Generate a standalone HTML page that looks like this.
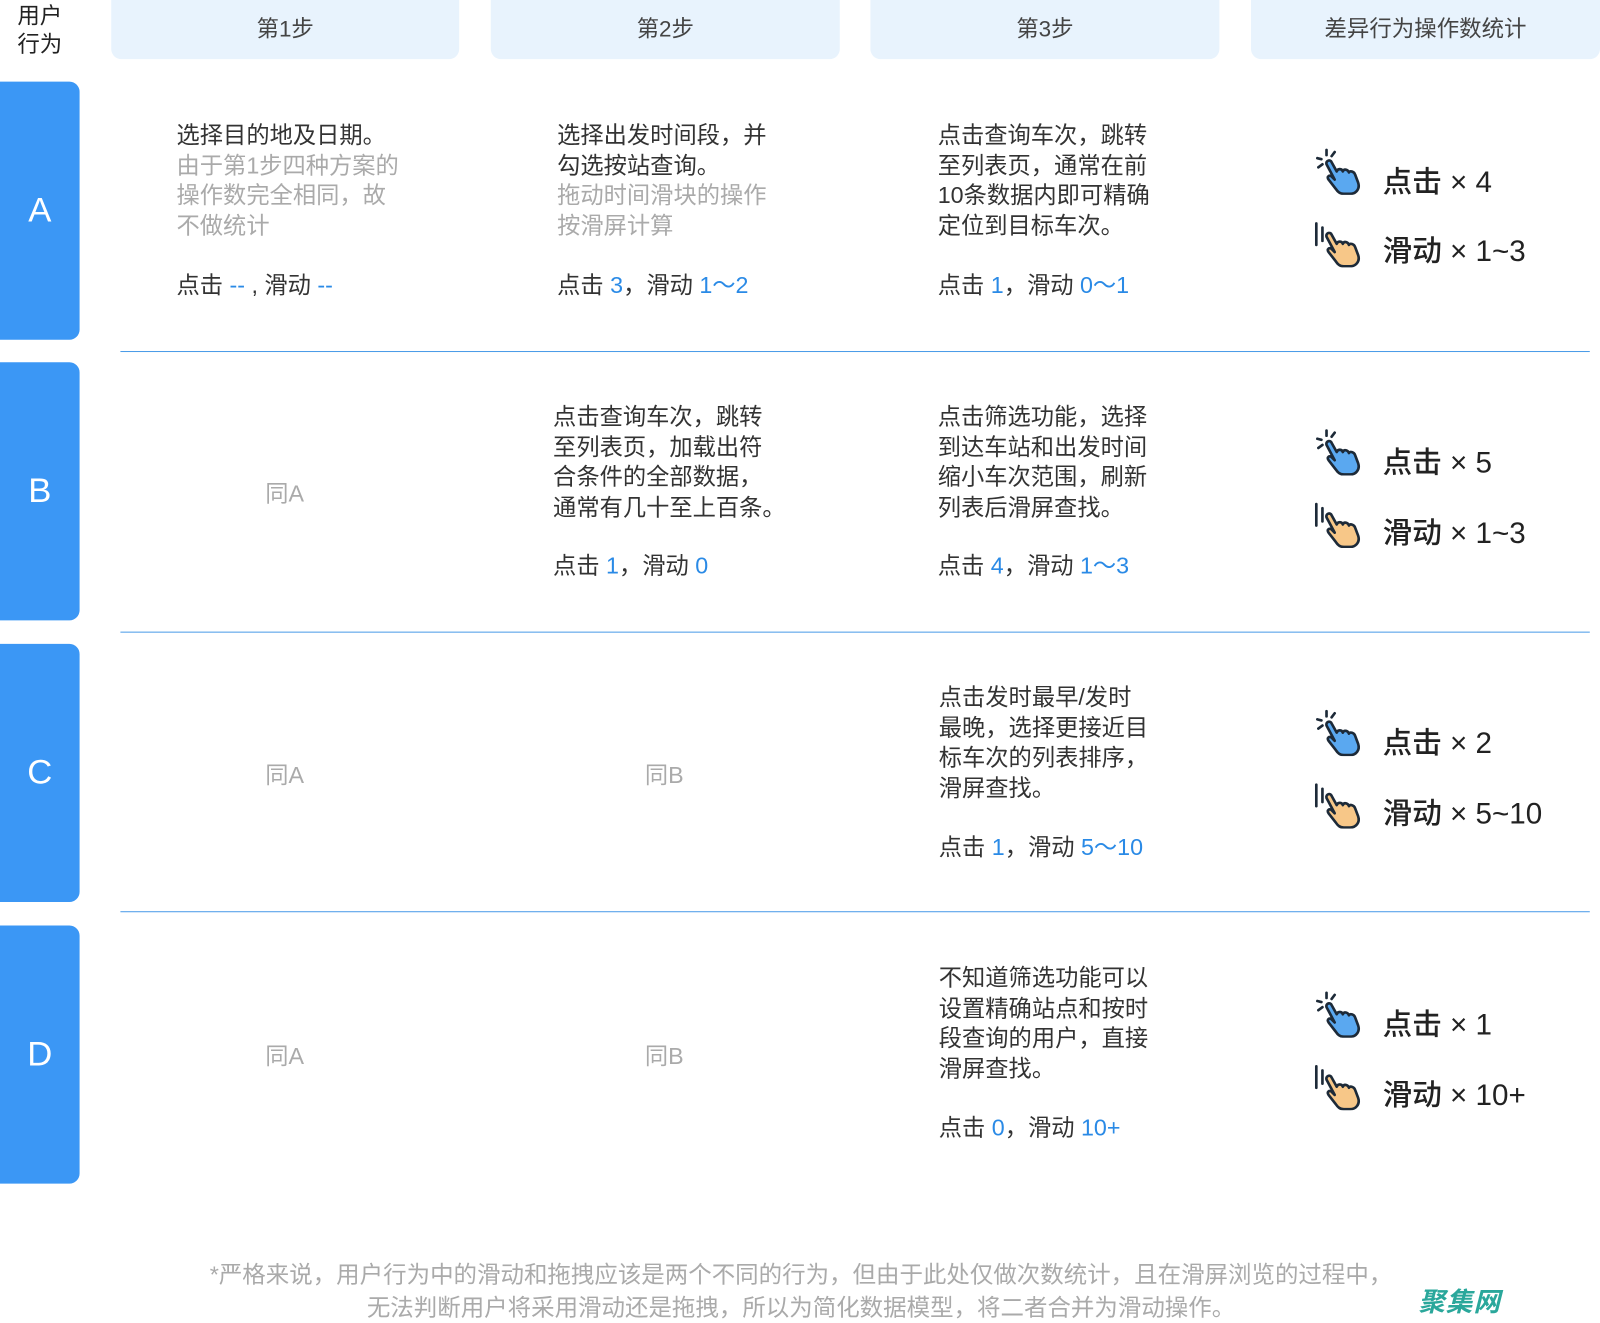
<!DOCTYPE html>
<html><head><meta charset="utf-8"><style>
*{margin:0;padding:0;box-sizing:border-box}
body{width:1600px;height:1320px;background:#fff;position:relative;overflow:hidden;font-family:"Liberation Sans","Noto Sans CJK SC",sans-serif;color:#333}
#w{position:absolute;left:0;top:0;width:1568px;height:1294px;transform:scale(1.0204);transform-origin:0 0}
.a{position:absolute}
.hd{position:absolute;top:0;height:58px;background:#e8f3fd;border-radius:0 0 10px 10px;font-size:22px;color:#444;text-align:center;line-height:58px}
.rl{position:absolute;left:0;width:78px;height:253px;background:#3b97f5;border-radius:0 10px 10px 0;color:#fff;font-size:34px;text-align:center;line-height:253px}
.ln{position:absolute;left:118px;width:1440px;height:1px;background:#4a9be8}
.t{position:absolute;font-size:22.8px;line-height:29.5px;color:#333;white-space:nowrap}
.g{color:#aaa}
.b{color:#2a8ae6}
.same{position:absolute;font-size:22.8px;color:#aaa;transform:translate(-50%,-50%)}
.st{position:absolute;font-size:29px;color:#222;white-space:nowrap;font-weight:500}
.ic{position:absolute;width:52px;height:46px}
</style></head><body>
<svg width="0" height="0" style="position:absolute"><defs>
<g id="hand">
<path d="M14 16 C13 12 18 11 19 14 L24 23 C25 20 29 20 30 23 C31 20 35 21 36 24 C37 22 41 23 42 26 L45 34 C47 40 43 45 37 45 L31 45 C27 45 25 43 23 40 L16 31 C14 28 17 26 19 28 L22 31 Z" stroke="#1d2a38" stroke-width="2.6" stroke-linejoin="round"/>
</g>
</defs></svg>
<div id="w">
<div class="a" style="left:17px;top:2px;font-size:22px;line-height:28px;color:#222">用户<br>行为</div>
<div class="hd" style="left:109px;width:341px">第1步</div>
<div class="hd" style="left:481px;width:342px">第2步</div>
<div class="hd" style="left:853px;width:342px">第3步</div>
<div class="hd" style="left:1226px;width:342px">差异行为操作数统计</div>

<div class="rl" style="top:80px">A</div>
<div class="rl" style="top:355px">B</div>
<div class="rl" style="top:631px">C</div>
<div class="rl" style="top:907px">D</div>
<div class="ln" style="top:344px"></div>
<div class="ln" style="top:619px"></div>
<div class="ln" style="top:893px"></div>

<div class="t" style="left:173px;top:118px">选择目的地及日期。<br><span class="g">由于第1步四种方案的<br>操作数完全相同，故<br>不做统计</span></div>
<div class="t" style="left:173px;top:265px">点击 <span class="b">--</span> , 滑动 <span class="b">--</span></div>
<div class="t" style="left:546px;top:118px">选择出发时间段，并<br>勾选按站查询。<br><span class="g">拖动时间滑块的操作<br>按滑屏计算</span></div>
<div class="t" style="left:546px;top:265px">点击 <span class="b">3</span>，滑动 <span class="b">1～2</span></div>
<div class="t" style="left:919px;top:118px">点击查询车次，跳转<br>至列表页，通常在前<br>10条数据内即可精确<br>定位到目标车次。</div>
<div class="t" style="left:919px;top:265px">点击 <span class="b">1</span>，滑动 <span class="b">0～1</span></div>

<div class="same" style="left:279px;top:482px">同A</div>
<div class="t" style="left:542px;top:394px">点击查询车次，跳转<br>至列表页，加载出符<br>合条件的全部数据，<br>通常有几十至上百条。</div>
<div class="t" style="left:542px;top:540px">点击 <span class="b">1</span>，滑动 <span class="b">0</span></div>
<div class="t" style="left:919px;top:394px">点击筛选功能，选择<br>到达车站和出发时间<br>缩小车次范围，刷新<br>列表后滑屏查找。</div>
<div class="t" style="left:919px;top:540px">点击 <span class="b">4</span>，滑动 <span class="b">1～3</span></div>

<div class="same" style="left:279px;top:758px">同A</div>
<div class="same" style="left:651px;top:758px">同B</div>
<div class="t" style="left:920px;top:669px">点击发时最早/发时<br>最晚，选择更接近目<br>标车次的列表排序，<br>滑屏查找。</div>
<div class="t" style="left:920px;top:816px">点击 <span class="b">1</span>，滑动 <span class="b">5～10</span></div>

<div class="same" style="left:279px;top:1033px">同A</div>
<div class="same" style="left:651px;top:1033px">同B</div>
<div class="t" style="left:920px;top:944px">不知道筛选功能可以<br>设置精确站点和按时<br>段查询的用户，直接<br>滑屏查找。</div>
<div class="t" style="left:920px;top:1091px">点击 <span class="b">0</span>，滑动 <span class="b">10+</span></div>

<svg class="ic" style="left:1286px;top:145px" viewBox="0 0 52 46"><g stroke="#1d2a38" stroke-width="2.6" stroke-linecap="round"><line x1="14" y1="2" x2="14" y2="7"/><line x1="5" y1="10" x2="9" y2="11"/><line x1="6" y1="19" x2="10" y2="16"/><line x1="22" y1="4" x2="19" y2="8"/></g><use href="#hand" fill="#5aa8f0"/></svg>
<div class="st" style="left:1355px;top:155px">点击 × 4</div>
<svg class="ic" style="left:1286px;top:216px" viewBox="0 0 52 46"><g stroke="#1d2a38" stroke-width="2.6" stroke-linecap="round"><line x1="4" y1="3" x2="4" y2="24"/><line x1="10" y1="7" x2="10" y2="20"/></g><use href="#hand" fill="#f7c788"/></svg>
<div class="st" style="left:1355px;top:223px">滑动 × 1~3</div>

<svg class="ic" style="left:1286px;top:420px" viewBox="0 0 52 46"><g stroke="#1d2a38" stroke-width="2.6" stroke-linecap="round"><line x1="14" y1="2" x2="14" y2="7"/><line x1="5" y1="10" x2="9" y2="11"/><line x1="6" y1="19" x2="10" y2="16"/><line x1="22" y1="4" x2="19" y2="8"/></g><use href="#hand" fill="#5aa8f0"/></svg>
<div class="st" style="left:1355px;top:430px">点击 × 5</div>
<svg class="ic" style="left:1286px;top:491px" viewBox="0 0 52 46"><g stroke="#1d2a38" stroke-width="2.6" stroke-linecap="round"><line x1="4" y1="3" x2="4" y2="24"/><line x1="10" y1="7" x2="10" y2="20"/></g><use href="#hand" fill="#f7c788"/></svg>
<div class="st" style="left:1355px;top:499px">滑动 × 1~3</div>

<svg class="ic" style="left:1286px;top:695px" viewBox="0 0 52 46"><g stroke="#1d2a38" stroke-width="2.6" stroke-linecap="round"><line x1="14" y1="2" x2="14" y2="7"/><line x1="5" y1="10" x2="9" y2="11"/><line x1="6" y1="19" x2="10" y2="16"/><line x1="22" y1="4" x2="19" y2="8"/></g><use href="#hand" fill="#5aa8f0"/></svg>
<div class="st" style="left:1355px;top:705px">点击 × 2</div>
<svg class="ic" style="left:1286px;top:766px" viewBox="0 0 52 46"><g stroke="#1d2a38" stroke-width="2.6" stroke-linecap="round"><line x1="4" y1="3" x2="4" y2="24"/><line x1="10" y1="7" x2="10" y2="20"/></g><use href="#hand" fill="#f7c788"/></svg>
<div class="st" style="left:1355px;top:774px">滑动 × 5~10</div>

<svg class="ic" style="left:1286px;top:971px" viewBox="0 0 52 46"><g stroke="#1d2a38" stroke-width="2.6" stroke-linecap="round"><line x1="14" y1="2" x2="14" y2="7"/><line x1="5" y1="10" x2="9" y2="11"/><line x1="6" y1="19" x2="10" y2="16"/><line x1="22" y1="4" x2="19" y2="8"/></g><use href="#hand" fill="#5aa8f0"/></svg>
<div class="st" style="left:1355px;top:981px">点击 × 1</div>
<svg class="ic" style="left:1286px;top:1042px" viewBox="0 0 52 46"><g stroke="#1d2a38" stroke-width="2.6" stroke-linecap="round"><line x1="4" y1="3" x2="4" y2="24"/><line x1="10" y1="7" x2="10" y2="20"/></g><use href="#hand" fill="#f7c788"/></svg>
<div class="st" style="left:1355px;top:1050px">滑动 × 10+</div>

<div class="a" style="left:0;width:1570px;top:1233px;text-align:center;font-size:23px;line-height:32px;color:#aaa">*严格来说，用户行为中的滑动和拖拽应该是两个不同的行为，但由于此处仅做次数统计，且在滑屏浏览的过程中，<br>无法判断用户将采用滑动还是拖拽，所以为简化数据模型，将二者合并为滑动操作。</div>
<div class="a" style="left:1390px;top:1256px;font-size:26px;font-weight:bold;font-style:italic;color:#2aa79b;letter-spacing:1px">聚集网</div>
</div>
</body></html>
